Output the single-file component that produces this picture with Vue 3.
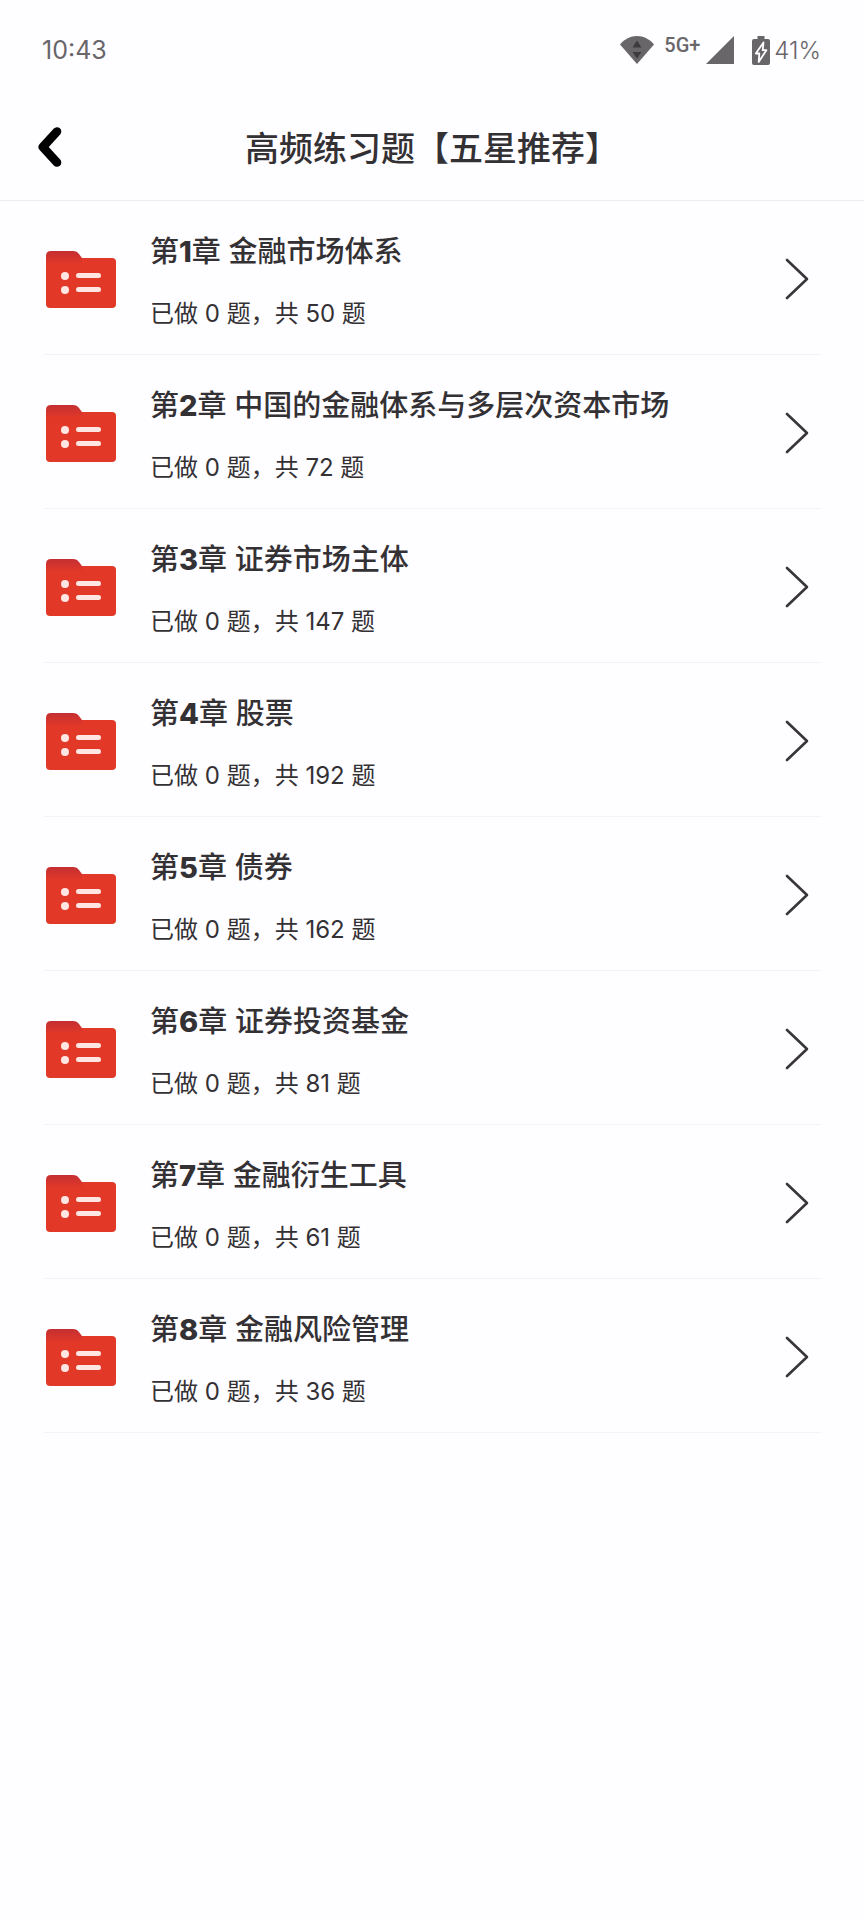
<template>
  <div class="page">
    <div class="status-bar">
      <span class="status-time">10:43</span>
      <div class="status-icons">
        <svg class="wifi" width="34" height="28" viewBox="0 0 34 28">
          <path d="M0 8.500C4.500 3 10.500 0 17 0S29.500 3 34 8.500L17 28Z" fill="#69666a" />
          <path d="M17 4.500L21.500 11.500H12.500ZM12.500 16H21.500L17 22.500Z" fill="#3d3a3e" />
        </svg>
        <span class="network">5G+</span>
        <svg class="signal" width="28" height="28" viewBox="0 0 28 28">
          <path d="M28 0V28H0Z" fill="#69666a" />
        </svg>
        <svg class="battery" width="18" height="29" viewBox="0 0 18 29">
          <path d="M5.500 0H12.500V3H16Q18 3 18 5V27Q18 29 16 29H2Q0 29 0 27V5Q0 3 2 3H5.500Z" fill="#69666a" />
          <path d="M11.500 6.500L3.800 17.500H7.300L6.700 26L14.400 14.200H10.700Z" fill="#69666a" stroke="#fefdff" stroke-width="1.800" stroke-linejoin="round" />
        </svg>
        <span class="battery-text">41%</span>
      </div>
    </div>

    <header class="nav-bar">
      <button class="back-btn" type="button" aria-label="返回">
        <svg width="24" height="40" viewBox="0 0 24 40">
          <path d="M19 4.500L4.800 20L19 35.500" fill="none" stroke="#000" stroke-width="8.600" stroke-linecap="round" stroke-linejoin="round" />
        </svg>
      </button>
      <h1 class="nav-title">高频练习题【五星推荐】</h1>
    </header>

    <ul class="chapter-list">
      <li v-for="item in chapters" :key="item.id" class="chapter-item">
        <a href="#" class="chapter-link" @click.prevent>
          <svg class="folder" width="70" height="57" viewBox="0 0 70 57">
            <defs>
              <linearGradient :id="'tab' + item.id" x1="0" y1="0" x2="0" y2="1">
                <stop offset="0" stop-color="#c42f33" />
                <stop offset="1" stop-color="#e23828" />
              </linearGradient>
            </defs>
            <path d="M0 11Q0 7 4 7H66Q70 7 70 11V53Q70 57 66 57H4Q0 57 0 53Z" fill="#e23828" />
            <path d="M0 5Q0 0 5 0H27Q31 0 33 3L36 7V13H0Z" :fill="'url(#tab' + item.id + ')'" />
            <g fill="#ffe6e3">
              <circle cx="19" cy="25" r="4" />
              <circle cx="19" cy="39" r="4" />
              <rect x="30" y="22" width="25" height="5" rx="2.500" />
              <rect x="30" y="36" width="25" height="5" rx="2.500" />
            </g>
          </svg>
          <div class="chapter-info">
            <h2 class="chapter-title">第<b>{{ item.id }}</b>章 {{ item.name }}</h2>
            <p class="chapter-count">已做 {{ item.done }} 题，共 {{ item.total }} 题</p>
          </div>
          <svg class="arrow" width="24" height="42" viewBox="0 0 24 42">
            <path d="M2 2L22 21L2 40" fill="none" stroke="#39363a" stroke-width="2.600" stroke-linecap="round" stroke-linejoin="round" />
          </svg>
        </a>
      </li>
    </ul>
  </div>
</template>

<script setup>
import { ref } from 'vue';

const chapters = ref([
  { id: 1, name: '金融市场体系', done: 0, total: 50 },
  { id: 2, name: '中国的金融体系与多层次资本市场', done: 0, total: 72 },
  { id: 3, name: '证券市场主体', done: 0, total: 147 },
  { id: 4, name: '股票', done: 0, total: 192 },
  { id: 5, name: '债券', done: 0, total: 162 },
  { id: 6, name: '证券投资基金', done: 0, total: 81 },
  { id: 7, name: '金融衍生工具', done: 0, total: 61 },
  { id: 8, name: '金融风险管理', done: 0, total: 36 }
]);
</script>

<style>
body {
  background: #fefdff;
}
</style>

<style scoped>
.page {
  min-height: 100vh;
  background: #fefdff;
  color: #343135;
  font-family: Inter, "Noto Sans CJK SC", sans-serif;
}

.status-bar {
  display: flex;
  justify-content: space-between;
  align-items: center;
  height: 96px;
  padding: 4px 43px 0 42px;
  box-sizing: border-box;
  color: #69666a;
  font-size: 25px;
}

.status-icons {
  display: flex;
  align-items: center;
}

.network {
  margin: 0 6px 10px 10px;
  font-family: Roboto, sans-serif;
  font-size: 20px;
  font-weight: 500;
  line-height: 24px;
}

.battery {
  margin: 0 4px 0 18px;
}

.battery-text {
  font-size: 24px;
  font-weight: 300;
}

.nav-bar {
  display: grid;
  grid-template-columns: 60px 1fr 60px;
  align-items: center;
  height: 105px;
  padding: 0 38px;
  box-sizing: border-box;
  border-bottom: 1px solid #eeecf0;
}

.back-btn {
  display: flex;
  padding: 0 0 2px;
  border: none;
  background: none;
  cursor: pointer;
}

.nav-title {
  margin: 0;
  padding-top: 2px;
  font-size: 34px;
  font-weight: 500;
  line-height: 48px;
  text-align: center;
  white-space: nowrap;
}

.chapter-list {
  margin: 0;
  padding: 0 43px 0 44px;
  list-style: none;
}

.chapter-item {
  border-bottom: 1px solid #f4f2f6;
}

.chapter-link {
  display: flex;
  align-items: center;
  padding: 26px 12px 23px 2px;
  color: inherit;
  text-decoration: none;
}

.folder,
.arrow {
  flex-shrink: 0;
}

.chapter-info {
  flex: 1;
  margin-left: 34px;
}

.chapter-title {
  margin: 0 0 20px;
  font-size: 29px;
  font-weight: 500;
  line-height: 50px;
}

.chapter-title b {
  font-weight: 800;
}

.chapter-count {
  margin: 0;
  font-size: 24px;
  line-height: 34px;
}
</style>
